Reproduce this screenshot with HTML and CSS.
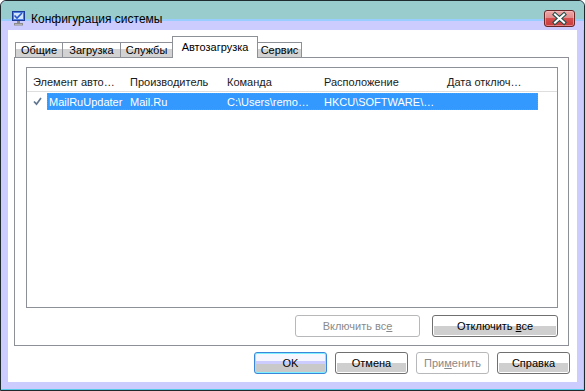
FILE: index.html
```html
<!DOCTYPE html>
<html lang="ru">
<head>
    <meta charset="UTF-8">
    <title>Конфигурация системы</title>
    <link rel="stylesheet" href="styles.css">
</head>
<body>

    <div class="window">
        <!-- Title bar -->
        <div class="titlebar">
            <svg class="app-icon" width="16" height="16" viewBox="0 0 16 16">
                <rect x="1.5" y="1.5" width="12" height="9" fill="#4f7fe0" stroke="#1c3c9c"/>
                <rect x="3" y="3" width="9" height="6" fill="#cfe4ff"/>
                <path d="M3.5 5.5 L6 8 L11 3" stroke="#2a56c8" stroke-width="1.6" fill="none"/>
                <rect x="6" y="11" width="3" height="2" fill="#8a8a8a"/>
                <rect x="3.5" y="13.5" width="8" height="1.5" fill="#d8d8d8" stroke="#8c8c8c" stroke-width="1"/>
            </svg>
            <span class="title">Конфигурация системы</span>
            <div class="close-btn">
                <svg width="29" height="15" viewBox="0 0 29 15">
                    <path d="M10 3.5 L19 11.5 M19 3.5 L10 11.5" stroke="#24504a" stroke-width="4.2" stroke-linecap="square"/>
                    <path d="M10 3.5 L19 11.5 M19 3.5 L10 11.5" stroke="#ffffff" stroke-width="2" stroke-linecap="square"/>
                </svg>
            </div>
        </div>

        <div class="client">
            <!-- Tabs -->
            <div class="tabs">
                <div class="tab tab-general">Общие</div>
                <div class="tab tab-boot">Загрузка</div>
                <div class="tab tab-services">Службы</div>
                <div class="tab tab-startup active">Автозагрузка</div>
                <div class="tab tab-tools">Сервис</div>
            </div>

            <div class="panel">
                <!-- Startup items list -->
                <div class="listview">
                    <div class="lv-header">
                        <div class="col col-1">Элемент авто…</div>
                        <div class="col col-2">Производитель</div>
                        <div class="col col-3">Команда</div>
                        <div class="col col-4">Расположение</div>
                        <div class="col col-5">Дата отключ…</div>
                    </div>
                    <div class="lv-row">
                        <span class="check">
                            <svg width="9" height="9" viewBox="0 0 9 9">
                                <path d="M1 4.5 L3.5 7.2 L8 1" stroke="#5f7590" stroke-width="1.7" fill="none"/>
                            </svg>
                        </span>
                        <div class="row-cells selected">
                            <div class="cell cell-1">MailRuUpdater</div>
                            <div class="cell cell-2">Mail.Ru</div>
                            <div class="cell cell-3">C:\Users\remo…</div>
                            <div class="cell cell-4">HKCU\SOFTWARE\…</div>
                            <div class="cell cell-5"></div>
                        </div>
                    </div>
                </div>

                <div class="panel-buttons">
                    <button class="btn btn-wide" disabled>Включить вс<u>е</u></button>
                    <button class="btn btn-wide btn-wide2">Отключить <u>в</u>се</button>
                </div>
            </div>

            <!-- Dialog buttons -->
            <div class="dialog-buttons">
                <button class="btn btn-default">OK</button>
                <button class="btn">Отмена</button>
                <button class="btn" disabled>При<u>м</u>енить</button>
                <button class="btn">Справка</button>
            </div>
        </div>
    </div>

</body>
</html>
```

FILE: styles.css
```css
/* General Styling */
body {
    margin: 0;
    padding: 0;
    font-family: "Liberation Sans", Arial, sans-serif;
    font-size: 11px;
    color: #000;
    background-color: #fff;
}

.window {
    width: 585px;
    height: 391px;
    box-sizing: border-box;
    border: 1px solid #1e2a2e;
    border-radius: 6px 6px 0 0;
    background-color: #ccccff;
    box-shadow: inset 0 -1px 0 #55c8e8, inset -1px 0 0 #8fd8f0;
    display: flex;
    flex-direction: column;
    overflow: hidden;
}

/* Title bar */
.titlebar {
    height: 29px;
    flex-shrink: 0;
    display: flex;
    align-items: flex-start;
    background: linear-gradient(#99cccc 0 18px, #99ccff 18px 20px, #ccccff 20px);
    border-radius: 5px 5px 0 0;
}

.app-icon {
    margin: 9px 0 0 10px;
}

.title {
    margin: 10px 0 0 4px;
    font-size: 12px;
    line-height: 16px;
}

.close-btn {
    margin: 9px 9px 0 auto;
    width: 29px;
    height: 15px;
    border: 1px solid #6a2626;
    border-radius: 3px;
    background: linear-gradient(#f0a8a8 0, #e08c8c 45%, #d85050 45%, #c83c3c 100%);
    box-shadow: inset 0 0 0 1px rgba(255, 200, 200, 0.5);
}

.close-btn svg {
    display: block;
}

/* Client area */
.client {
    flex: 1;
    margin: 0 7px 8px 7px;
    background-color: #fff;
    display: flex;
    flex-direction: column;
    padding: 6px 7px 8px 6px;
}

/* Tabs */
.tabs {
    height: 21px;
    display: flex;
    align-items: flex-end;
    padding-left: 1px;
}

.tab {
    box-sizing: border-box;
    height: 15px;
    border: 1px solid #8d9096;
    border-bottom: none;
    line-height: 14px;
    text-align: center;
    background: linear-gradient(#fff 0 6px, #d2d2d2 6px);
    margin-left: -1px;
}

.tab-general {
    margin-left: 0;
    width: 48px;
}

.tab-boot {
    width: 59px;
}

.tab-services {
    width: 53px;
}

.tab-startup {
    width: 86px;
}

.tab-tools {
    width: 45px;
}

.tab.active {
    position: relative;
    z-index: 1;
    height: 22px;
    margin-bottom: -1px;
    padding-top: 3px;
    background: #fff;
}

/* Tab panel */
.panel {
    box-sizing: border-box;
    width: 555px;
    height: 289px;
    border: 1px solid #8d9096;
    padding: 9px 10px 8px 11px;
    display: flex;
    flex-direction: column;
}

.listview {
    box-sizing: border-box;
    width: 532px;
    height: 241px;
    border: 1px solid #8d9096;
}

.lv-header {
    box-sizing: border-box;
    height: 24px;
    padding-top: 8px;
    border-bottom: 1px solid #dedede;
    display: flex;
    line-height: 13px;
    color: #1a1a1a;
}

.col {
    box-sizing: border-box;
    padding-left: 6px;
    white-space: nowrap;
    overflow: hidden;
}

.col-1, .col-2, .col-3 {
    width: 97px;
}

.col-4 {
    width: 123px;
}

.col-5 {
    width: 97px;
}

.lv-row {
    margin-top: 1px;
    height: 17px;
    display: flex;
    align-items: center;
}

.check {
    width: 20px;
    height: 17px;
    padding-left: 6px;
    box-sizing: border-box;
    display: flex;
    align-items: center;
}

.check svg {
    display: block;
}

.row-cells {
    display: flex;
    height: 17px;
    width: 491px;
    line-height: 17px;
    padding-top: 1px;
    box-sizing: border-box;
}

.row-cells.selected {
    background-color: #3399ff;
    color: #fff;
    outline: 1px dotted #d8802c;
    outline-offset: -1px;
}

.cell {
    box-sizing: border-box;
    padding-left: 6px;
    white-space: nowrap;
    overflow: hidden;
}

.cell-1 {
    width: 77px;
    padding-left: 2px;
}

.cell-2, .cell-3 {
    width: 97px;
}

.cell-4 {
    width: 123px;
}

.cell-5 {
    flex: 1;
}

/* Buttons */
.panel-buttons {
    margin-top: 7px;
    display: flex;
    justify-content: flex-end;
    gap: 12px;
}

.dialog-buttons {
    margin-top: 6px;
    display: flex;
    justify-content: flex-end;
    gap: 8px;
}

.btn {
    box-sizing: border-box;
    width: 73px;
    height: 22px;
    padding: 0;
    font-family: "Liberation Sans", Arial, sans-serif;
    font-size: 11px;
    color: #000;
    border: 1px solid #707070;
    border-radius: 3px;
    background: linear-gradient(#ffffff 0 50%, #cfcfcf 50%);
    box-shadow: inset 0 0 0 1px #fff;
}

.btn-wide {
    width: 125px;
}

.btn-wide2 {
    width: 126px;
}

.btn:disabled {
    color: #8a8a8a;
    border-color: #b6b8ba;
    background: #fff;
    box-shadow: none;
}

.btn-default {
    border-color: #3a86d8;
    box-shadow: inset 0 0 0 1px #7ff0ff;
    background: linear-gradient(#f6f6ff 0 40%, #ccccff 40% 55%, #c9c9c9 55%);
}
```
